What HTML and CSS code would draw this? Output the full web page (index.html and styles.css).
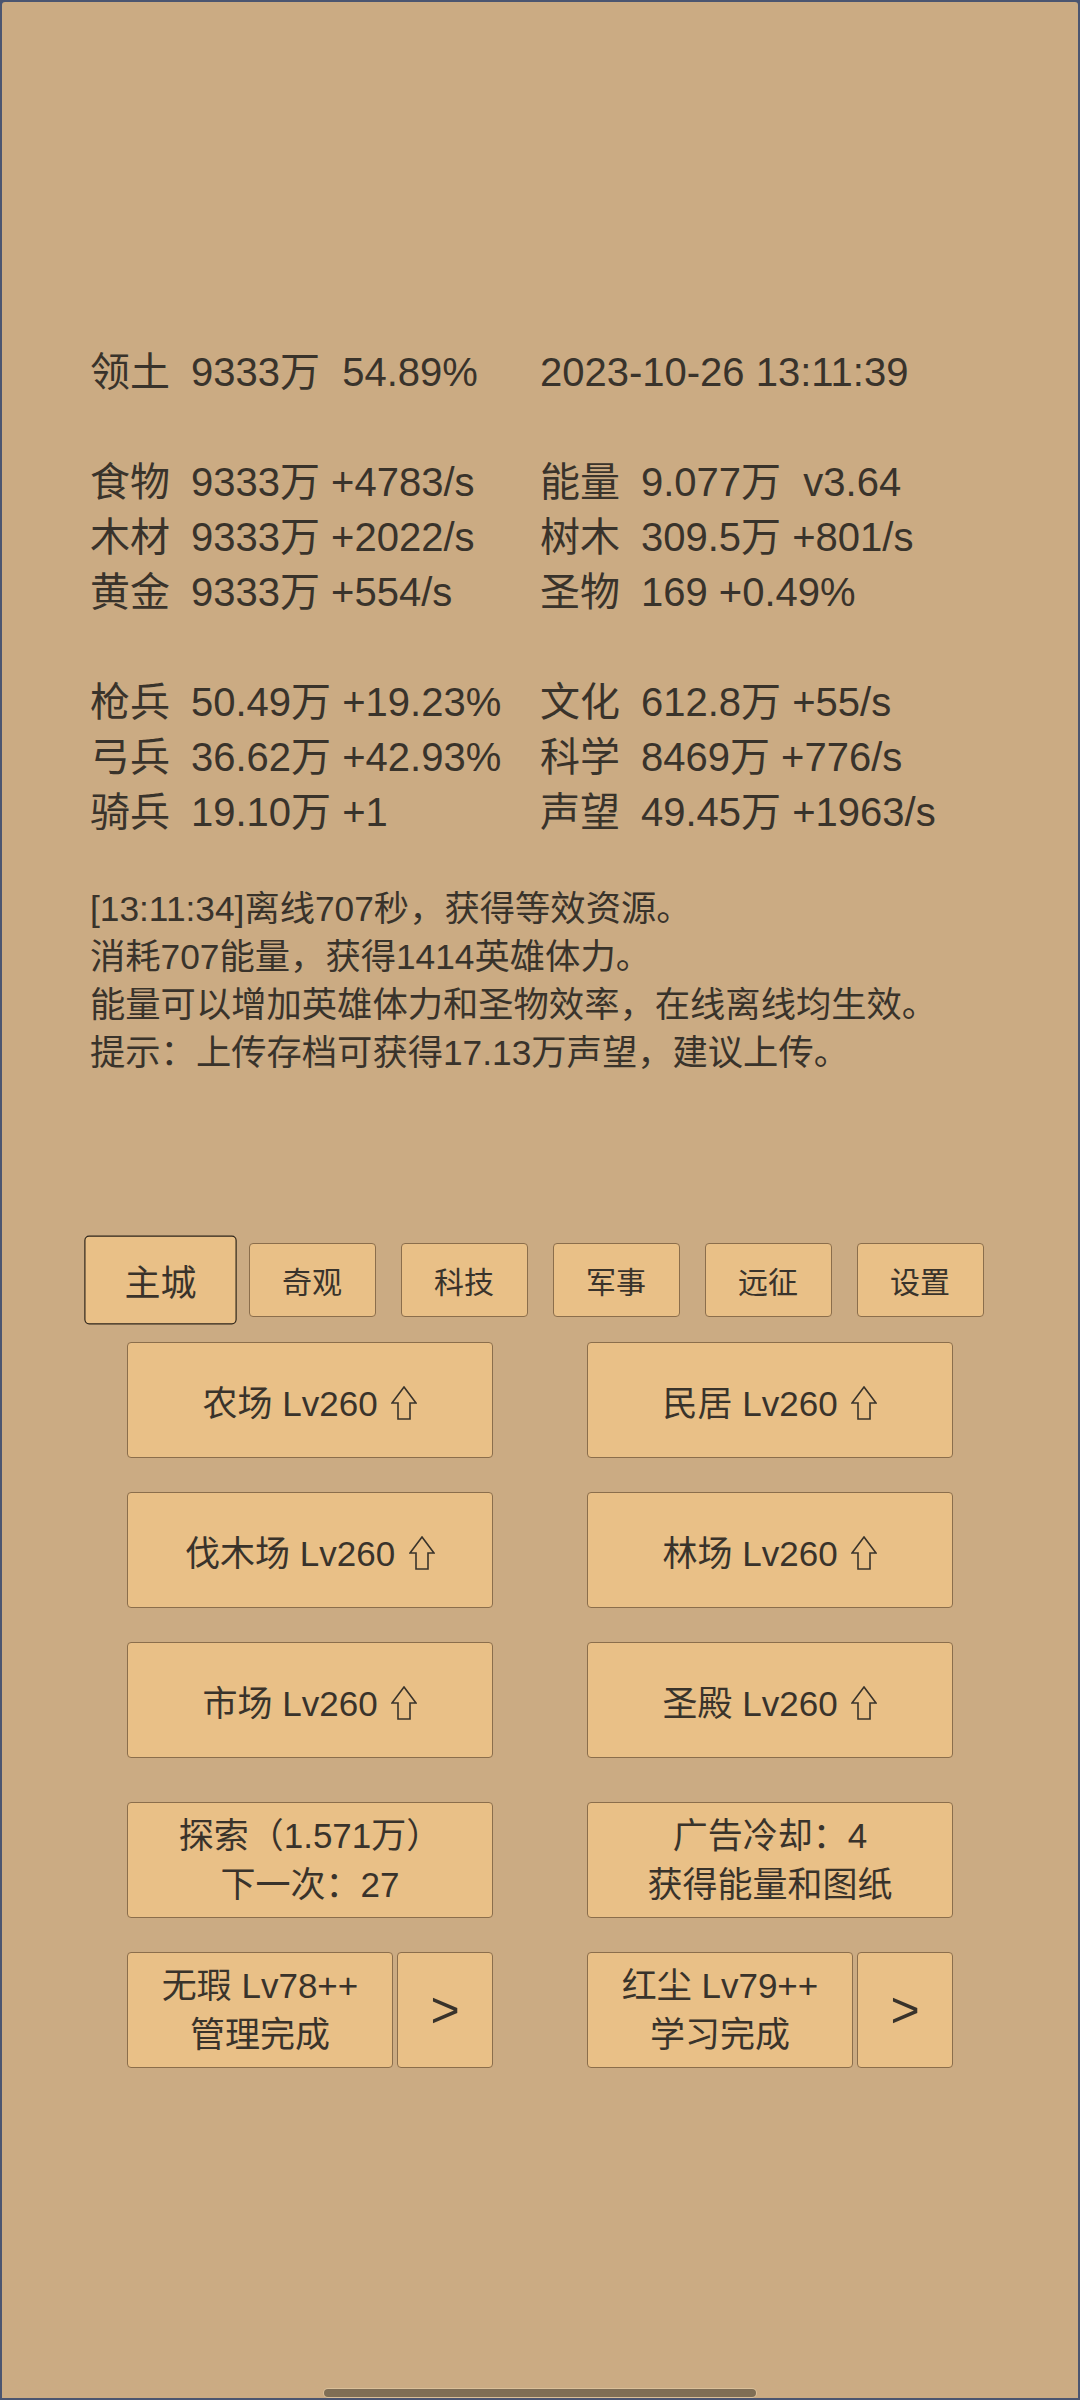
FILE: index.html
```html
<!DOCTYPE html>
<html lang="zh-CN">
<head>
    <meta charset="UTF-8">
    <meta name="viewport" content="width=device-width, initial-scale=1.0">
    <title>主城</title>
    <link rel="stylesheet" href="styles.css">
</head>
<body>

<div class="screen">
    <div class="stats">
        <div class="stat"><span class="label">领土</span>9333万  54.89%</div>
        <div class="stat">2023-10-26 13:11:39</div>
        <div class="stat"></div>
        <div class="stat"></div>
        <div class="stat"><span class="label">食物</span>9333万 +4783/s</div>
        <div class="stat"><span class="label">能量</span>9.077万  v3.64</div>
        <div class="stat"><span class="label">木材</span>9333万 +2022/s</div>
        <div class="stat"><span class="label">树木</span>309.5万 +801/s</div>
        <div class="stat"><span class="label">黄金</span>9333万 +554/s</div>
        <div class="stat"><span class="label">圣物</span>169 +0.49%</div>
        <div class="stat"></div>
        <div class="stat"></div>
        <div class="stat"><span class="label">枪兵</span>50.49万 +19.23%</div>
        <div class="stat"><span class="label">文化</span>612.8万 +55/s</div>
        <div class="stat"><span class="label">弓兵</span>36.62万 +42.93%</div>
        <div class="stat"><span class="label">科学</span>8469万 +776/s</div>
        <div class="stat"><span class="label">骑兵</span>19.10万 +1</div>
        <div class="stat"><span class="label">声望</span>49.45万 +1963/s</div>
    </div>

    <div class="log">
        <p>[13:11:34]离线707秒，获得等效资源。</p>
        <p>消耗707能量，获得1414英雄体力。</p>
        <p>能量可以增加英雄体力和圣物效率，在线离线均生效。</p>
        <p>提示：上传存档可获得17.13万声望，建议上传。</p>
    </div>

    <div class="tabs">
        <div class="tab active">主城</div>
        <div class="tab">奇观</div>
        <div class="tab">科技</div>
        <div class="tab">军事</div>
        <div class="tab">远征</div>
        <div class="tab">设置</div>
    </div>

    <div class="grid buildings">
        <div class="btn"><span>农场 Lv260 <svg class="up" viewBox="0 0 26 34"><polygon points="13,1 25,17 19,17 19,33 7,33 7,17 1,17"/></svg></span></div>
        <div class="btn"><span>民居 Lv260 <svg class="up" viewBox="0 0 26 34"><polygon points="13,1 25,17 19,17 19,33 7,33 7,17 1,17"/></svg></span></div>
        <div class="btn"><span>伐木场 Lv260 <svg class="up" viewBox="0 0 26 34"><polygon points="13,1 25,17 19,17 19,33 7,33 7,17 1,17"/></svg></span></div>
        <div class="btn"><span>林场 Lv260 <svg class="up" viewBox="0 0 26 34"><polygon points="13,1 25,17 19,17 19,33 7,33 7,17 1,17"/></svg></span></div>
        <div class="btn"><span>市场 Lv260 <svg class="up" viewBox="0 0 26 34"><polygon points="13,1 25,17 19,17 19,33 7,33 7,17 1,17"/></svg></span></div>
        <div class="btn"><span>圣殿 Lv260 <svg class="up" viewBox="0 0 26 34"><polygon points="13,1 25,17 19,17 19,33 7,33 7,17 1,17"/></svg></span></div>
    </div>

    <div class="grid actions">
        <div class="btn two">探索（1.571万）<br>下一次：27</div>
        <div class="btn two">广告冷却：4<br>获得能量和图纸</div>
        <div class="hero">
            <div class="btn two">无瑕 Lv78++<br>管理完成</div>
            <div class="btn more">&gt;</div>
        </div>
        <div class="hero">
            <div class="btn two">红尘 Lv79++<br>学习完成</div>
            <div class="btn more">&gt;</div>
        </div>
    </div>

    <div class="home-bar"></div>
</div>

</body>
</html>
```

FILE: styles.css
```css
body {
    margin: 0;
    background-color: #4b5570;
    font-family: "Liberation Sans", "Noto Sans CJK SC", sans-serif;
    color: #39332b;
}
.screen {
    width: 1080px;
    height: 2400px;
    box-sizing: border-box;
    border: 2px solid #4b5570;
    border-radius: 5px 5px 0 0;
    background-color: #cbab83;
    padding-top: 343px;
    display: flex;
    flex-direction: column;
}
.stats {
    display: grid;
    grid-template-columns: 450px 450px;
    grid-auto-rows: 55px;
    padding-left: 88px;
    font-size: 40px;
    line-height: 55px;
}
.stat {
    white-space: pre;
}
.label {
    display: inline-block;
    width: 101px;
}
.log {
    margin-top: 45px;
    padding-left: 88px;
    font-size: 35.3px;
    line-height: 48px;
}
.log p {
    margin: 0;
}
.tabs {
    display: flex;
    justify-content: center;
    gap: 25px;
    margin-top: 166px;
}
.tab {
    width: 127px;
    height: 74px;
    box-sizing: border-box;
    display: flex;
    align-items: center;
    justify-content: center;
    background-color: #e9c087;
    border: 1px solid #8b6e4c;
    border-radius: 4px;
    font-size: 30px;
}
.tab.active {
    transform: scale(1.2);
    border-color: #2f261b;
}
.grid {
    display: grid;
    grid-template-columns: repeat(2, 366px);
    grid-auto-rows: 116px;
    column-gap: 94px;
    row-gap: 34px;
    justify-content: center;
}
.buildings {
    margin-top: 25px;
}
.actions {
    margin-top: 44px;
}
.btn {
    box-sizing: border-box;
    display: flex;
    align-items: center;
    justify-content: center;
    background-color: #e9c087;
    border: 1px solid #8b6e4c;
    border-radius: 4px;
    font-size: 35px;
    white-space: pre;
}
.btn.two {
    text-align: center;
    line-height: 49px;
}
.up {
    width: 26px;
    height: 34px;
    margin-left: 4px;
    vertical-align: -4px;
    fill: none;
    stroke: #39332b;
    stroke-width: 1.6;
}
.hero {
    display: flex;
    gap: 4px;
}
.hero .two {
    width: 266px;
}
.hero .more {
    width: 96px;
    font-size: 50px;
}
.home-bar {
    width: 432px;
    height: 8px;
    margin: auto auto 1px;
    border-radius: 4px;
    background-color: #7f6e55;
    box-shadow: 0 0 0 1px rgba(236, 214, 176, 0.5);
}
```
